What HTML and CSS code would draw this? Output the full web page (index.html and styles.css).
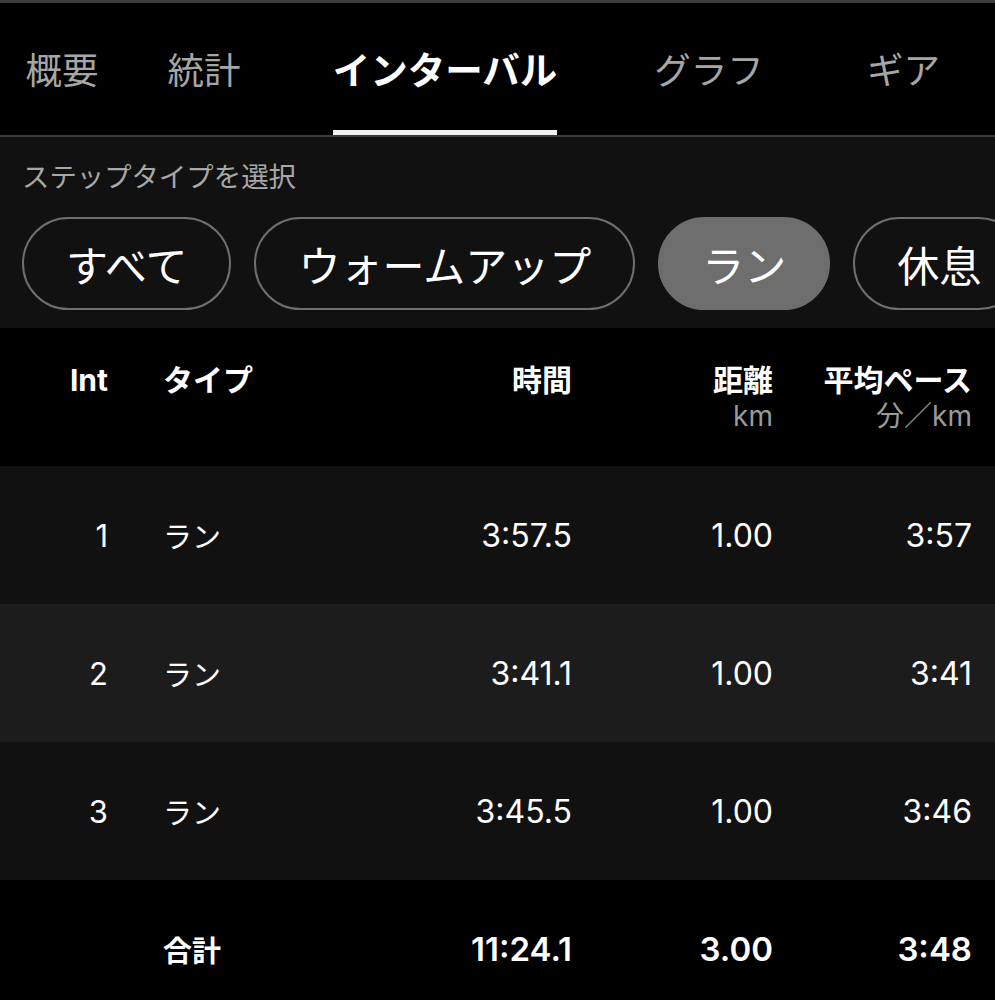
FILE: index.html
```html
<!DOCTYPE html>
<html lang="ja">
<head>
<meta charset="utf-8">
<link rel="stylesheet" href="styles.css">
</head>
<body>
<div class="page">
  <div class="topline"></div>
  <nav class="tabs">
    <div class="tab"><span class="tab-label">概要</span></div>
    <div class="tab"><span class="tab-label">統計</span></div>
    <div class="tab active"><span class="tab-label">インターバル</span></div>
    <div class="tab"><span class="tab-label">グラフ</span></div>
    <div class="tab"><span class="tab-label">ギア</span></div>
  </nav>
  <section class="filter">
    <div class="filter-title">ステップタイプを選択</div>
    <div class="pills">
      <div class="pill">すべて</div>
      <div class="pill">ウォームアップ</div>
      <div class="pill selected">ラン</div>
      <div class="pill">休息</div>
    </div>
  </section>
  <div class="table">
    <div class="row head">
      <div class="c-int"><div class="h">Int</div></div>
      <div class="c-type"><div class="h">タイプ</div></div>
      <div class="c-num"><div class="h">時間</div></div>
      <div class="c-num"><div class="h">距離</div><div class="sub">km</div></div>
      <div class="c-num"><div class="h">平均ペース</div><div class="sub">分／km</div></div>
    </div>
    <div class="row odd">
      <div class="c-int">1</div><div class="c-type">ラン</div><div class="c-num">3:57.5</div><div class="c-num">1.00</div><div class="c-num">3:57</div>
    </div>
    <div class="row even">
      <div class="c-int">2</div><div class="c-type">ラン</div><div class="c-num">3:41.1</div><div class="c-num">1.00</div><div class="c-num">3:41</div>
    </div>
    <div class="row odd">
      <div class="c-int">3</div><div class="c-type">ラン</div><div class="c-num">3:45.5</div><div class="c-num">1.00</div><div class="c-num">3:46</div>
    </div>
    <div class="row total">
      <div class="c-int"></div><div class="c-type">合計</div><div class="c-num">11:24.1</div><div class="c-num">3.00</div><div class="c-num">3:48</div>
    </div>
  </div>
</div>
</body>
</html>
```

FILE: styles.css
```css
* { box-sizing: border-box; }
html, body {
  margin: 0;
  padding: 0;
  background: #000;
}
body {
  font-family: "Inter", "Noto Sans CJK JP", sans-serif;
  color: #fff;
  width: 995px;
  height: 1000px;
  overflow: hidden;
}
.page { width: 995px; }
.topline {
  height: 3px;
  background: #3c3c3c;
}
.tabs {
  display: grid;
  grid-template-columns: 124px 160px 322px 206px 183px;
  height: 134px;
  background: #000;
  border-bottom: 2px solid #3a3a3a;
}
.tab {
  display: flex;
  flex-direction: column;
  align-items: center;
  justify-content: flex-end;
}
.tab-label {
  font-size: 36.5px;
  line-height: 44px;
  color: #a6a6a6;
  padding-bottom: 37px;
  border-bottom: 5px solid transparent;
  white-space: nowrap;
}
.tab.active .tab-label {
  color: #fff;
  font-weight: 700;
  font-size: 37.5px;
  border-bottom-color: #f2f2f2;
}
.filter {
  background: #111;
  padding: 22px 0 18px 22px;
}
.filter-title {
  font-size: 27.4px;
  line-height: 36px;
  color: #a8a8a8;
}
.pills {
  display: flex;
  gap: 23px;
  margin-top: 22px;
  white-space: nowrap;
  overflow: hidden;
}
.pill {
  flex: none;
  height: 93px;
  padding: 0 42px;
  border: 2px solid #6f6f6f;
  border-radius: 47px;
  display: flex;
  align-items: center;
  font-size: 42px;
  color: #fff;
}
.pill.selected {
  background: #6e6e6e;
  border-color: #6e6e6e;
}
.row {
  display: grid;
  grid-template-columns: 163px 200px 209px 201px 199px;
  height: 138px;
  align-items: center;
  font-size: 29px;
}
.row .c-num { font-size: 32px; }
.row.head {
  align-items: start;
  padding-top: 34px;
  background: #000;
  font-weight: 700;
}
.row.odd { background: #111; }
.row.even { background: #1c1c1c; }
.row.total { background: #000; font-weight: 600; }
.row.total .c-num { font-size: 33px; }
.row.total .c-type { font-weight: 700; }
.c-int {
  text-align: right;
  padding-right: 55px;
}
.row .c-int { font-size: 31px; }
.c-type { text-align: left; }
.c-num { text-align: right; }
.row.head .h { line-height: 36px; font-size: 30px; }
.row.head .sub {
  line-height: 36px;
  font-size: 28px;
  font-weight: 400;
  color: #9a9a9a;
}
```
